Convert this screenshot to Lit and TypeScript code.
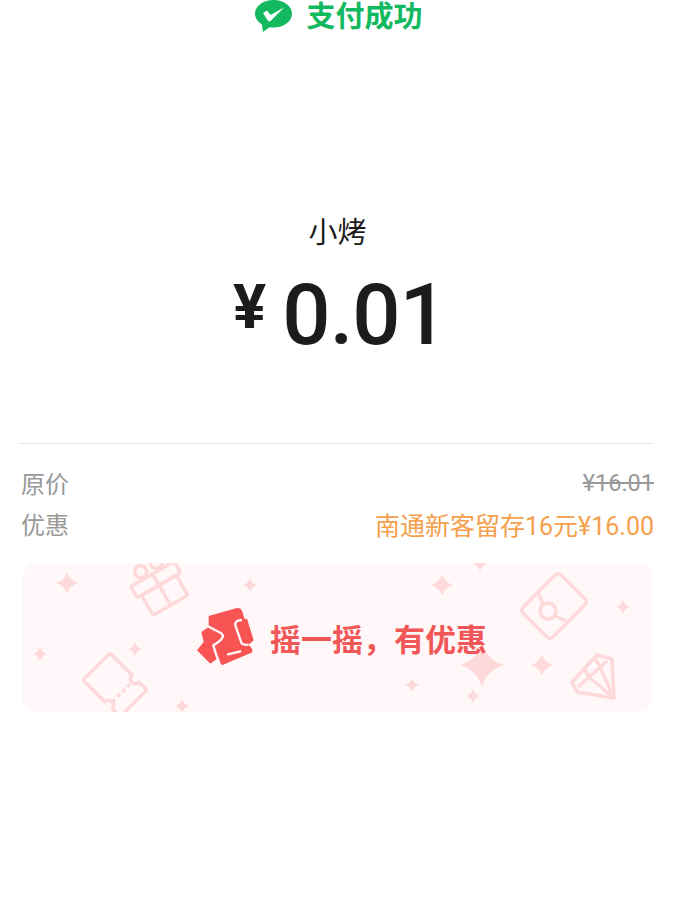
import { LitElement, css, html, svg } from 'lit';
import { customElement } from 'lit/decorators.js';

// four point sparkle centred on x,y
const star = (x: number, y: number, r: number) => {
  const k = r * 0.22;
  return svg`<path d="M${x} ${y - r}Q${x + k} ${y - k} ${x + r} ${y}Q${x + k} ${y + k} ${x} ${y + r}Q${x - k} ${y + k} ${x - r} ${y}Q${x - k} ${y - k} ${x} ${y - r}Z" fill="#fdd9da"/>`;
};

const stars: [number, number, number][] = [
  [67, 583, 11], [40, 654, 7], [135, 649, 7], [182, 706, 7], [250, 585, 7],
  [442, 585, 11], [480, 564, 7], [623, 607, 7], [412, 685, 7], [482, 665, 22],
  [542, 665, 11], [473, 696, 7],
];

@customElement('app-root')
export class AppRoot extends LitElement {
  static styles = css`
    :host {
      display: block;
      width: 697px;
      min-height: 913px;
      background: #fff;
      font-family: "Roboto", "Noto Sans CJK SC", sans-serif;
    }

    .status {
      display: flex;
      justify-content: center;
      align-items: center;
      gap: 14px;
      height: 32px;
      padding-right: 19px;
      color: #12b95f;
      font-size: 29px;
      font-weight: 700;
      line-height: 32px;
    }

    .status span {
      padding-top: 2px;
    }

    .status svg {
      width: 37px;
      height: 32px;
    }

    .merchant {
      margin-top: 183px;
      padding-right: 22px;
      text-align: center;
      color: #1c1c1c;
      font-size: 29px;
      line-height: 36px;
    }

    .amount {
      display: flex;
      justify-content: center;
      align-items: baseline;
      gap: 16px;
      margin-top: 14px;
      padding-right: 17px;
      color: #1c1c1c;
      font-weight: 500;
      font-size: 85px;
      letter-spacing: -1px;
      line-height: 100px;
    }

    .amount .yen {
      font-size: 62px;
      font-weight: 700;
      letter-spacing: 0;
      position: relative;
      top: -16px;
    }

    .detail {
      margin: 70px 43px 0 20px;
      padding-top: 18px;
      border-top: 1px solid #e5e5e5;
    }

    .row {
      display: flex;
      justify-content: space-between;
      align-items: center;
      height: 41px;
      color: #999;
      font-size: 24px;
    }

    .row > span:first-child {
      padding-left: 1px;
    }

    .old {
      font-size: 23.500px;
      text-decoration: line-through;
    }

    .promo {
      color: #f4a04c;
      font-size: 25px;
    }

    .banner {
      position: relative;
      display: flex;
      justify-content: center;
      align-items: center;
      width: 625px;
      height: 149px;
      margin: 19px 0 0 22px;
      padding-left: 5px;
      border-radius: 14px;
      background: #fff7f8;
      overflow: hidden;
    }

    .art {
      position: absolute;
      left: 0;
      top: 0;
      width: 630px;
      height: 149px;
    }

    .shake {
      position: relative;
      display: flex;
      align-items: center;
      gap: 10px;
      color: #f15757;
      font-size: 31px;
      font-weight: 700;
      line-height: 40px;
    }

    .shake span {
      padding-top: 6px;
    }

    .shake svg {
      width: 68px;
      height: 68px;
      margin-bottom: 3px;
    }
  `;

  render() {
    return html`
      <div class="status">
        <svg viewBox="0 0 37 32">
          <path d="M18.500 0C8.300 0 0 6 0 13.600c0 4.400 2.700 8.300 6.900 10.800L8 32l6.500-4.800c1.300.2 2.700.3 4 .3C28.700 27.500 37 21.400 37 13.700S28.700 0 18.500 0Z" fill="#12b95f"/>
          <path d="M8 13L12 10.500L15.500 15L29 7.500L15.500 21Q13.800 22 12.800 20.500Z" fill="#fff"/>
        </svg>
        <span>支付成功</span>
      </div>
      <div class="merchant">小烤</div>
      <div class="amount"><span class="yen">¥</span><span>0.01</span></div>
      <div class="detail">
        <div class="row"><span>原价</span><span class="old">¥16.01</span></div>
        <div class="row"><span>优惠</span><span class="promo">南通新客留存16元¥16.00</span></div>
      </div>
      <div class="banner">
        <svg class="art" viewBox="22 563 630 149">
          ${stars.map(([x, y, r]) => star(x, y, r))}
          <g fill="none" stroke="#fdd9da" stroke-width="3.500" stroke-linejoin="round">
            <g transform="translate(160 587) rotate(-30)">
              <rect x="-25" y="-15" width="50" height="13" rx="2"/>
              <rect x="-20" y="-2" width="40" height="23" rx="2"/>
              <path d="M0 -15V21"/>
              <circle cx="-9" cy="-23" r="6"/>
              <circle cx="9" cy="-23" r="6"/>
            </g>
            <path transform="translate(115 685) rotate(45)" d="M-24 -19H5a5 5 0 0 0 10 0H24q2 0 2 2V17q0 2-2 2H15a5 5 0 0 0-10 0H-24q-2 0-2-2V-17q0-2 2-2Z"/>
            <path transform="translate(115 685) rotate(45)" d="M10 -11V13" stroke-dasharray="3.500 3.500"/>
            <rect x="-21" y="-27" width="42" height="54" rx="4" transform="translate(554 606) rotate(45)"/>
            <circle cx="548" cy="611" r="8"/>
            <path d="M538 592L543 604M555 616L566 621"/>
            <path d="M597 655L612 659L614 698L577 692L572 682Z"/>
            <path d="M578 687L607 661M585 670L590 678M595 658L600 667M614 698L590 678M614 698L600 667"/>
          </g>
        </svg>
        <div class="shake">
          <svg viewBox="0 0 204 204">
            <path d="M50 42L135 18Q146 16 150 26L158 52L165 50L185 115L170 128L180 140Q184 150 176 153L90 190L75 170L55 185L15 145L35 120L28 90L50 75Z" fill="#f85454"/>
            <path d="M46 72L88 94Q104 106 64 130Q72 160 82 182" fill="none" stroke="#fff7f8" stroke-width="7" stroke-linejoin="round"/>
            <path d="M150 54Q128 54 130 70L148 122Q152 130 170 128" fill="none" stroke="#fff7f8" stroke-width="7" stroke-linejoin="round"/>
            <path d="M108 157L145 148" fill="none" stroke="#fff7f8" stroke-width="7" stroke-linecap="round"/>
          </svg>
          <span>摇一摇，有优惠</span>
        </div>
      </div>
    `;
  }
}
